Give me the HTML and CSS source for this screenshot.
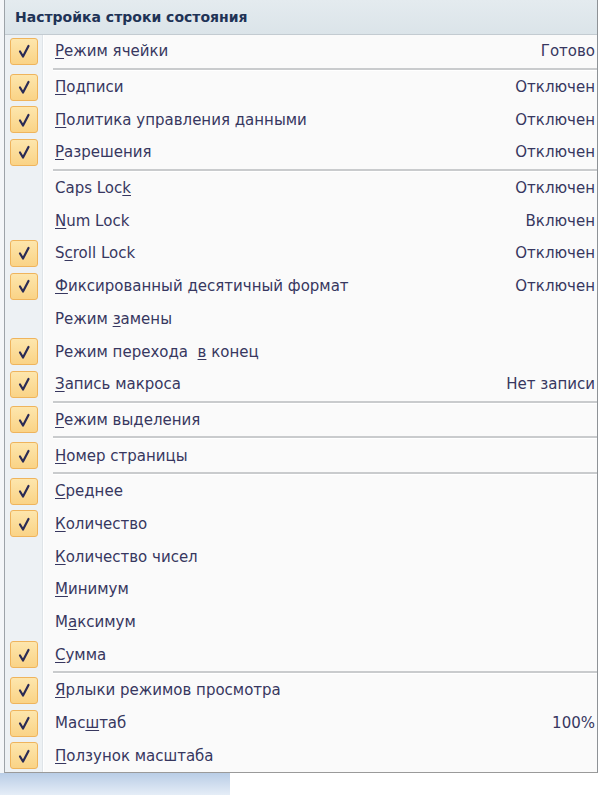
FILE: index.html
```html
<!DOCTYPE html>
<html lang="ru">
<head>
<meta charset="utf-8">
<title>Настройка строки состояния</title>
<link rel="stylesheet" href="styles.css">
</head>
<body>
<div class="page">
  <div class="menu">
    <div class="menu-header">Настройка строки состояния</div>
    <div class="menu-body">
      <div class="row"><span class="check on"><svg viewBox="0 0 20 20"><path d="M6 10.5 L9 15.5 L14.5 5"/></svg></span><span class="label"><u>Р</u>ежим ячейки</span><span class="value">Готово</span></div>
      <div class="sep"></div>
      <div class="row"><span class="check on"><svg viewBox="0 0 20 20"><path d="M6 10.5 L9 15.5 L14.5 5"/></svg></span><span class="label"><u>П</u>одписи</span><span class="value">Отключен</span></div>
      <div class="row"><span class="check on"><svg viewBox="0 0 20 20"><path d="M6 10.5 L9 15.5 L14.5 5"/></svg></span><span class="label"><u>П</u>олитика управления данными</span><span class="value">Отключен</span></div>
      <div class="row"><span class="check on"><svg viewBox="0 0 20 20"><path d="M6 10.5 L9 15.5 L14.5 5"/></svg></span><span class="label"><u>Р</u>азрешения</span><span class="value">Отключен</span></div>
      <div class="sep"></div>
      <div class="row"><span class="check"></span><span class="label">Caps Loc<u>k</u></span><span class="value">Отключен</span></div>
      <div class="row"><span class="check"></span><span class="label"><u>N</u>um Lock</span><span class="value">Включен</span></div>
      <div class="row"><span class="check on"><svg viewBox="0 0 20 20"><path d="M6 10.5 L9 15.5 L14.5 5"/></svg></span><span class="label">S<u>c</u>roll Lock</span><span class="value">Отключен</span></div>
      <div class="row"><span class="check on"><svg viewBox="0 0 20 20"><path d="M6 10.5 L9 15.5 L14.5 5"/></svg></span><span class="label"><u>Ф</u>иксированный десятичный формат</span><span class="value">Отключен</span></div>
      <div class="row"><span class="check"></span><span class="label">Режим <u>з</u>амены</span><span class="value"></span></div>
      <div class="row"><span class="check on"><svg viewBox="0 0 20 20"><path d="M6 10.5 L9 15.5 L14.5 5"/></svg></span><span class="label">Режим перехода&nbsp; <u>в</u> конец</span><span class="value"></span></div>
      <div class="row"><span class="check on"><svg viewBox="0 0 20 20"><path d="M6 10.5 L9 15.5 L14.5 5"/></svg></span><span class="label"><u>З</u>апись макроса</span><span class="value">Нет записи</span></div>
      <div class="sep"></div>
      <div class="row"><span class="check on"><svg viewBox="0 0 20 20"><path d="M6 10.5 L9 15.5 L14.5 5"/></svg></span><span class="label"><u>Р</u>ежим выделения</span><span class="value"></span></div>
      <div class="sep"></div>
      <div class="row"><span class="check on"><svg viewBox="0 0 20 20"><path d="M6 10.5 L9 15.5 L14.5 5"/></svg></span><span class="label"><u>Н</u>омер страницы</span><span class="value"></span></div>
      <div class="sep"></div>
      <div class="row"><span class="check on"><svg viewBox="0 0 20 20"><path d="M6 10.5 L9 15.5 L14.5 5"/></svg></span><span class="label"><u>С</u>реднее</span><span class="value"></span></div>
      <div class="row"><span class="check on"><svg viewBox="0 0 20 20"><path d="M6 10.5 L9 15.5 L14.5 5"/></svg></span><span class="label"><u>К</u>оличество</span><span class="value"></span></div>
      <div class="row"><span class="check"></span><span class="label"><u>К</u>оличество чисел</span><span class="value"></span></div>
      <div class="row"><span class="check"></span><span class="label"><u>М</u>инимум</span><span class="value"></span></div>
      <div class="row"><span class="check"></span><span class="label">М<u>а</u>ксимум</span><span class="value"></span></div>
      <div class="row"><span class="check on"><svg viewBox="0 0 20 20"><path d="M6 10.5 L9 15.5 L14.5 5"/></svg></span><span class="label"><u>С</u>умма</span><span class="value"></span></div>
      <div class="sep"></div>
      <div class="row"><span class="check on"><svg viewBox="0 0 20 20"><path d="M6 10.5 L9 15.5 L14.5 5"/></svg></span><span class="label"><u>Я</u>рлыки режимов просмотра</span><span class="value"></span></div>
      <div class="row"><span class="check on"><svg viewBox="0 0 20 20"><path d="M6 10.5 L9 15.5 L14.5 5"/></svg></span><span class="label">Мас<u>ш</u>таб</span><span class="value">100%</span></div>
      <div class="row"><span class="check on"><svg viewBox="0 0 20 20"><path d="M6 10.5 L9 15.5 L14.5 5"/></svg></span><span class="label"><u>П</u>олзунок масштаба</span><span class="value"></span></div>
    </div>
  </div>
  <div class="below">
    <div class="below-blue"></div>
    <div class="below-rest"></div>
  </div>
</div>
</body>
</html>
```

FILE: styles.css
```css
html, body {
  margin: 0;
  padding: 0;
  background: #ffffff;
}

.page {
  width: 600px;
  height: 795px;
  display: flex;
  flex-direction: column;
  background: linear-gradient(to right, #f4f6f8 0 4px, #ffffff 4px);
}

.menu {
  margin-left: 4px;
  width: 592px;
  border-left: 1px solid #9da3a8;
  border-right: 1px solid #8e9296;
  border-bottom: 1px solid #9a9a9a;
  font-family: "DejaVu Sans", sans-serif;
  font-size: 15px;
  color: #37375f;
}

.menu-header {
  height: 35px;
  box-sizing: border-box;
  border-bottom: 1px solid #c3cbd1;
  background: linear-gradient(to bottom, #e4ebef, #dbe4e9);
  color: #1f3356;
  font-weight: bold;
  font-size: 14px;
  line-height: 35px;
  padding-left: 10px;
}

.menu-body {
  background: linear-gradient(to right, #edf1f4 0 37px, #dfe4e8 37px 38px, #ffffff 38px 39px, #fafafa 39px);
}

.row {
  display: flex;
  align-items: center;
  height: 32.7px;
}

.check {
  flex: 0 0 28px;
  height: 27px;
  margin-left: 5px;
  margin-right: 17px;
  box-sizing: border-box;
  border-radius: 3px;
}

.check.on {
  background: linear-gradient(to bottom, #fde6ad, #fad386);
  border: 1px solid #efb45c;
  display: flex;
  align-items: center;
  justify-content: center;
}

.check svg {
  width: 20px;
  height: 20px;
}

.check svg path {
  fill: none;
  stroke: #2b2b55;
  stroke-width: 2.2;
  stroke-linecap: round;
  stroke-linejoin: round;
}

.label {
  flex: 1 1 auto;
  white-space: nowrap;
}

.label u {
  text-decoration-thickness: 1px;
  text-underline-offset: 2px;
}

.value {
  padding-right: 2px;
  white-space: nowrap;
}

.sep {
  height: 3px;
  margin-left: 48px;
  background: linear-gradient(to bottom, #c9cbcd 0 2px, #ffffff 2px);
}

.below {
  flex: 1 1 auto;
  display: flex;
}

.below-blue {
  width: 230px;
  background: linear-gradient(to bottom, #b9cde6, #e5edf7);
}

.below-rest {
  flex: 1 1 auto;
  background: #ffffff;
}
```
